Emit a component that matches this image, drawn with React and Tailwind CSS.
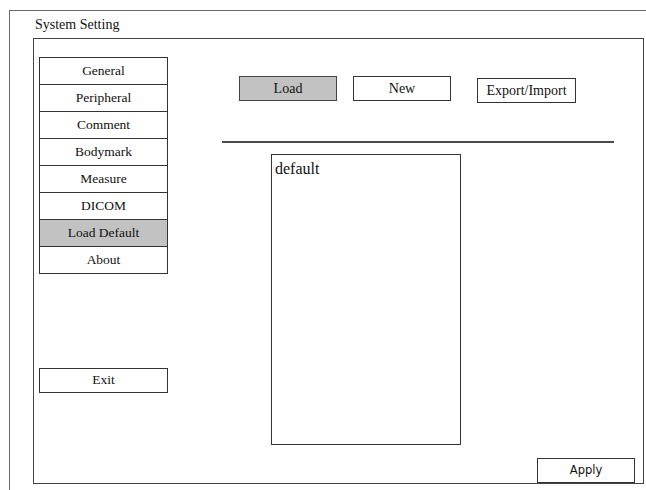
export default function App() {
  const menu = [
    "General",
    "Peripheral",
    "Comment",
    "Bodymark",
    "Measure",
    "DICOM",
    "Load Default",
    "About",
  ];
  const active = "Load Default";

  return (
    <div
      className="h-[490px] w-[646px] overflow-hidden bg-white pl-[9px] pt-[10px] text-[#111]"
      style={{ fontFamily: '"Liberation Serif", "Times New Roman", serif' }}
    >
      {/* outer window frame */}
      <div className="h-[500px] border-l border-t border-[#6a6a6a] pl-[23px]">
        <div className="h-[27px] pl-[2px] pt-[6px] text-[14px] leading-[16px]">
          System Setting
        </div>

        {/* inner panel */}
        <div className="flex h-[446px] w-[611px] border border-[#444] pl-[5px]">
          {/* left menu */}
          <div className="flex w-[129px] flex-col">
            <div className="mt-[18px] border-x border-t border-[#333]">
              {menu.map((item) => (
                <div
                  key={item}
                  className={
                    "flex h-[27px] items-center justify-center border-b border-[#333] text-[13.5px] " +
                    (item === active ? "bg-[#c2c2c2]" : "bg-white")
                  }
                >
                  {item}
                </div>
              ))}
            </div>
            <button className="mt-[94px] h-[25px] w-[129px] border border-[#333] bg-white text-[13.5px]">
              Exit
            </button>
          </div>

          {/* right content */}
          <div className="flex flex-1 flex-col">
            <div className="ml-[71px] mt-[37px] flex items-start">
              <button className="h-[25px] w-[98px] border border-[#444] bg-[#c2c2c2] text-[14px]">
                Load
              </button>
              <button className="ml-[16px] h-[25px] w-[98px] border border-[#333] bg-white text-[14px]">
                New
              </button>
              <button className="ml-[26px] mt-[2px] h-[25px] w-[99px] border border-[#333] bg-white text-[14px]">
                Export/Import
              </button>
            </div>

            <div className="ml-[54px] mt-[38px] h-[2px] w-[392px] bg-[#4a4a4a]" />

            <div className="ml-[103px] mt-[11px] h-[292px] w-[190px] border border-[#333] pl-[3px] pt-[5px] text-[16px] leading-[18px]">
              default
            </div>

            <button
              className="ml-[369px] mt-[13px] h-[25px] w-[98px] border border-[#333] bg-white text-[11.5px]"
              style={{ fontFamily: '"DejaVu Sans", Verdana, sans-serif' }}
            >
              Apply
            </button>
          </div>
        </div>
      </div>
    </div>
  );
}
